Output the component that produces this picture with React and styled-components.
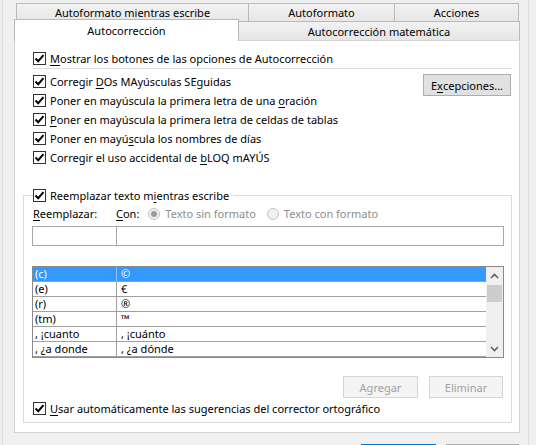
import React from 'react';
import styled, { createGlobalStyle } from 'styled-components';

const GlobalStyle = createGlobalStyle`
  html, body {
    margin: 0;
    padding: 0;
    background: #f0f0f0;
  }
  body {
    font-family: "Noto Sans", "Liberation Sans", sans-serif;
    font-size: 11px;
    color: #000;
  }
`;

const replacements = [
    ['(c)', '©'],
    ['(e)', '€'],
    ['(r)', '®'],
    ['(tm)', '™'],
    [', ¡cuanto', ', ¡cuánto'],
    [', ¿a donde', ', ¿a dónde'],
];

function CheckIcon() {
    return (
        <svg width="11" height="11" viewBox="0 0 11 11">
            <path d="M1.5 5.5 L4.2 8.2 L9.5 2.2" stroke="#000" strokeWidth="2" fill="none" />
        </svg>
    );
}

function Chevron({ down }) {
    return (
        <svg width="9" height="6" viewBox="0 0 9 6">
            <path
                d={down ? 'M1 1 L4.5 4.5 L8 1' : 'M1 5 L4.5 1.5 L8 5'}
                stroke="#606060"
                strokeWidth="1.6"
                fill="none"
            />
        </svg>
    );
}

function Check({ children, ...rest }) {
    return (
        <CheckRow {...rest}>
            <Box><CheckIcon /></Box>
            <span>{children}</span>
        </CheckRow>
    );
}

function App() {
    return (
        <Window>
            <GlobalStyle />
            <Frame>
                <TabRowBack>
                    <BackTab $w={232}>Autoformato mientras escribe</BackTab>
                    <BackTab $w={146}>Autoformato</BackTab>
                    <BackTab $w={125} $last>Acciones</BackTab>
                </TabRowBack>
                <TabRowFront>
                    <FrontTab>Autocorrección</FrontTab>
                    <BackTab $w={281} $last $noLeft $h={19}>Autocorrección matemática</BackTab>
                </TabRowFront>

                <Panel>
                    <TopSection>
                        <Check>
                            <U>M</U>ostrar los botones de las opciones de Autocorrección
                        </Check>
                        <Separator />
                        <Middle>
                            <div>
                                <Check>Corregir <U>D</U>Os MAyúsculas SEguidas</Check>
                                <Check>Poner en mayúscula la primera letra de una <U>o</U>ración</Check>
                                <Check><U>P</U>oner en mayúscula la primera letra de celdas de tablas</Check>
                                <Check>Poner en mayú<U>s</U>cula los nombres de días</Check>
                                <Check>Corregir el uso accidental de <U>b</U>LOQ mAYÚS</Check>
                            </div>
                            <Button>E<U>x</U>cepciones...</Button>
                        </Middle>
                    </TopSection>

                    <GroupBox>
                        <Legend>
                            Reemplazar texto m<U>i</U>entras escribe
                        </Legend>
                        <LabelsRow>
                            <FieldLabel><U>R</U>eemplazar:</FieldLabel>
                            <FieldLabel><U>C</U>on:</FieldLabel>
                            <RadioGroup>
                                <RadioOption>
                                    <Radio $checked />
                                    Texto sin formato
                                </RadioOption>
                                <RadioOption>
                                    <Radio />
                                    Texto con formato
                                </RadioOption>
                            </RadioGroup>
                        </LabelsRow>
                        <InputsRow>
                            <Field $w={85} />
                            <Field $grow />
                        </InputsRow>

                        <ListBox>
                            <Rows>
                                {replacements.map(([from, to], i) => (
                                    <Row key={from} $selected={i === 0}>
                                        <Cell $first $selected={i === 0}>{from}</Cell>
                                        <Cell>{to}</Cell>
                                    </Row>
                                ))}
                            </Rows>
                            <ScrollBar>
                                <Arrow><Chevron /></Arrow>
                                <Thumb />
                                <Track />
                                <Arrow><Chevron down /></Arrow>
                            </ScrollBar>
                        </ListBox>

                        <ActionRow>
                            <Button $disabled $w={75}>Agregar</Button>
                            <Button $disabled $w={74}>Eliminar</Button>
                        </ActionRow>

                        <Check style={{ marginTop: 1, marginLeft: 1 }}>
                            <U>U</U>sar automáticamente las sugerencias del corrector ortográfico
                        </Check>
                    </GroupBox>
                </Panel>

                <Footer>
                    <Button $w={75} $primary>Aceptar</Button>
                    <Button $w={73}>Cancelar</Button>
                </Footer>
            </Frame>
        </Window>
    );
}

const Window = styled.div`
    width: 536px;
    height: 445px;
    overflow: hidden;
    padding-left: 2px;
    box-sizing: border-box;
    background: #f0f0f0;
`;

const Frame = styled.div`
    width: 527px;
    height: 100%;
    box-sizing: border-box;
    border-left: 1px solid #dcdcdc;
    border-right: 1px solid #dcdcdc;
    padding: 3px 8px 0 11px;
`;

const TabRowBack = styled.div`
    display: flex;
    height: 18px;
    margin-left: 2px;
`;

const TabRowFront = styled.div`
    display: flex;
    align-items: flex-end;
    height: 19px;
    position: relative;
    z-index: 1;
`;

const BackTab = styled.div`
    width: ${(props) => props.$w}px;
    height: ${(props) => props.$h || 18}px;
    box-sizing: border-box;
    border-top: 1px solid #b9b9b9;
    border-left: ${(props) => props.$noLeft ? 'none' : '1px solid #b9b9b9'};
    border-right: ${(props) => props.$last ? '1px solid #b9b9b9' : 'none'};
    background: linear-gradient(#f2f2f2, #e6e6e6);
    text-align: center;
    line-height: ${(props) => props.$h || 18}px;
    white-space: nowrap;
`;

const FrontTab = styled.div`
    width: 225px;
    height: 22px;
    margin-bottom: -1px;
    box-sizing: border-box;
    border: 1px solid #b9b9b9;
    border-bottom: none;
    background: #fff;
    text-align: center;
    line-height: 22px;
`;

const Panel = styled.div`
    height: 393px;
    box-sizing: border-box;
    border: 1px solid #d4d4d4;
    background: #fff;
    padding: 8px 7px 0 8px;
`;

const TopSection = styled.div`
    margin-left: 10px;
`;

const CheckRow = styled.div`
    display: flex;
    align-items: center;
    gap: 4px;
    height: 19px;
    white-space: nowrap;
`;

const Box = styled.span`
    width: 13px;
    height: 13px;
    box-sizing: border-box;
    border: 1px solid #333;
    background: #fff;
    display: flex;
    align-items: center;
    justify-content: center;
    flex-shrink: 0;
`;

const U = styled.span`
    text-decoration: underline;
    text-underline-offset: 2px;
`;

const Separator = styled.div`
    height: 1px;
    background: #dcdcdc;
    margin-bottom: 3px;
`;

const Middle = styled.div`
    display: flex;
    justify-content: space-between;
    align-items: flex-start;
`;

const Button = styled.div`
    width: ${(props) => props.$w || 88}px;
    height: 22px;
    box-sizing: border-box;
    display: flex;
    align-items: center;
    justify-content: center;
    margin-top: 2px;
    margin-right: 1px;
    border: 1px solid ${(props) => props.$primary ? '#0078d7' : props.$disabled ? '#d4d4d4' : '#adadad'};
    background: ${(props) => props.$disabled ? '#f4f4f4' : '#e1e1e1'};
    color: ${(props) => props.$disabled ? '#a0a0a0' : '#000'};
    white-space: nowrap;
`;

const GroupBox = styled.div`
    margin-top: 28px;
    border: 1px solid #dcdcdc;
    padding: 0 7px 4px 8px;
    display: flex;
    flex-direction: column;
`;

const Legend = styled(Check)`
    align-self: flex-start;
    margin-top: -10px;
    margin-left: 1px;
    padding-right: 4px;
    background: #fff;
`;

const LabelsRow = styled.div`
    display: flex;
    align-items: center;
    height: 17px;
    white-space: nowrap;
`;

const FieldLabel = styled.span`
    &:first-child {
        width: 84px;
        padding-left: 1px;
        box-sizing: border-box;
    }
`;

const RadioGroup = styled.div`
    display: flex;
    gap: 11px;
    margin-left: 9px;
    color: #8d8d8d;
`;

const RadioOption = styled.span`
    display: flex;
    align-items: center;
    gap: 5px;
`;

const Radio = styled.span`
    width: 12px;
    height: 12px;
    box-sizing: border-box;
    border-radius: 50%;
    border: 1px solid #c4c4c4;
    background: #f0f0f0;
    display: flex;
    align-items: center;
    justify-content: center;
    &::after {
        content: '';
        display: ${(props) => props.$checked ? 'block' : 'none'};
        width: 6px;
        height: 6px;
        border-radius: 50%;
        background: #9a9a9a;
    }
`;

const InputsRow = styled.div`
    display: flex;
    margin-top: 4px;
    height: 20px;
`;

const Field = styled.div`
    box-sizing: border-box;
    border: 1px solid #a8a8a8;
    background: #fff;
    width: ${(props) => props.$w ? `${props.$w}px` : 'auto'};
    flex: ${(props) => props.$grow ? 1 : 'none'};
    margin-left: ${(props) => props.$grow ? '-1px' : 0};
`;

const ListBox = styled.div`
    display: flex;
    margin-top: 20px;
    height: 92px;
    box-sizing: border-box;
    border: 1px solid #8a8a8a;
    background: #fff;
`;

const Rows = styled.div`
    flex: 1;
`;

const Row = styled.div`
    display: grid;
    grid-template-columns: 84px 1fr;
    height: 15px;
    box-sizing: border-box;
    border-bottom: 1px solid #a0a0a0;
    background: ${(props) => props.$selected ? '#3399ff' : '#fff'};
    color: ${(props) => props.$selected ? '#fff' : '#000'};
    line-height: 14px;
    white-space: nowrap;
`;

const Cell = styled.span`
    overflow: hidden;
    padding-left: ${(props) => props.$first ? 2 : 4}px;
    border-right: ${(props) => props.$first
        ? `1px solid ${props.$selected ? '#8cc4ff' : '#a0a0a0'}`
        : 'none'};
`;

const ScrollBar = styled.div`
    width: 17px;
    background: #f0f0f0;
    display: flex;
    flex-direction: column;
`;

const Arrow = styled.div`
    height: 17px;
    display: flex;
    align-items: center;
    justify-content: center;
`;

const Thumb = styled.div`
    height: 17px;
    margin: 1px 1px 0;
    background: #cdcdcd;
`;

const Track = styled.div`
    flex: 1;
`;

const ActionRow = styled.div`
    display: flex;
    justify-content: flex-end;
    gap: 10px;
    margin-top: 16px;
`;

const Footer = styled.div`
    display: flex;
    justify-content: flex-end;
    gap: 9px;
    margin-top: 9px;
`;

export default App;
